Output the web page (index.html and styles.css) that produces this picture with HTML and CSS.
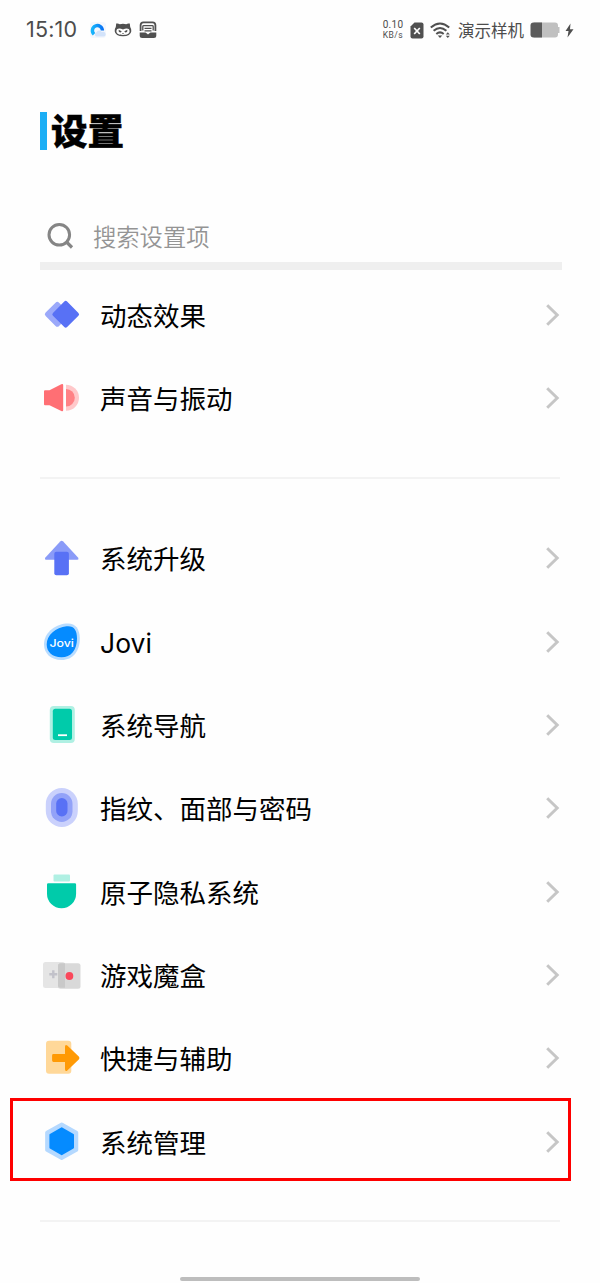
FILE: index.html
```html
<!DOCTYPE html>
<html lang="zh-CN">
<head>
<meta charset="utf-8">
<title>设置</title>
<link rel="stylesheet" href="styles.css">
</head>
<body>
<svg class="defs" width="0" height="0"><symbol id="chevron" viewBox="0 0 16 24"><path d="M3.200 2.200 13.200 12 3.200 21.800" fill="none" stroke="#c6c6c6" stroke-width="3"/></symbol></svg>
<header class="status">
  <span class="time">15:10</span>
  <svg class="app-icon" width="18" height="18" viewBox="0 0 18 18"><defs><linearGradient id="q" x1="0" y1="0" x2="1" y2="0"><stop offset="0" stop-color="#16b4fb"/><stop offset="1" stop-color="#0874f5"/></linearGradient></defs><rect x="1" y="1" width="16" height="16" rx="3" fill="#f4f7fc"/><path d="M5 13.200A5 5 0 1 1 13.400 9.500" fill="none" stroke="url(#q)" stroke-width="3.400"/><path d="M7 15.500a2.300 2.300 0 0 1 .5-4.200 3 3 0 0 1 5.300-.2 2.300 2.300 0 0 1 2.500 4.400z" fill="#d3e3fa"/></svg>
  <svg class="app-icon" width="18" height="18" viewBox="0 0 18 18"><path d="M2.200 2.600Q4 2 5.800 3.200q3.200-.9 6.400 0Q14 2 15.800 2.600L16.200 6q1.300 2 1.100 4.200-.7 5-8.300 5t-8.300-5Q.5 8 1.800 6z" fill="#505050"/><path d="M2.400 10C2.800 6.800 6 7 9 8.600c3-1.600 6.200-1.800 6.600 1.400.1 2.700-2.600 3.900-6.600 3.900S2.300 12.700 2.400 10z" fill="#fff"/><path d="m4.600 8.800 3.100 1.400-.9 1.400-1.900-.5zM13.400 8.800l-3.100 1.400.9 1.400 1.900-.5zM8 12h2l-1 1.200z" fill="#505050"/></svg>
  <svg class="app-icon" width="18" height="18" viewBox="0 0 18 18"><path d="M1.600 10V4.200Q1.600 1.300 4.500 1.300h9q2.900 0 2.900 2.900V10" fill="none" stroke="#505050" stroke-width="1.800"/><path d="M3.800 9.500V5.400q0-.8 1-.8h8.400q1 0 1 .8v4.100M5.500 7.300h7M5.500 9.800h7" fill="none" stroke="#505050" stroke-width="1.300"/><path d="M.7 11.500h5.800l1.700 1.200q.8 1.200 1.600 0l1.700-1.200h5.800v3q0 2.500-2.500 2.500H3.200Q.7 17 .7 14.500z" fill="#505050"/></svg>
  <div class="status-right">
    <span class="speed"><span>0.10</span><span class="unit">KB/s</span></span>
    <svg class="sim" width="14" height="17" viewBox="0 0 14 17"><path d="M4.500.5H11.500Q13.500.5 13.500 2.500v12q0 2-2 2h-9q-2 0-2-2v-10z" fill="#505050"/><path d="m4.200 6 5.600 6M9.800 6l-5.600 6" stroke="#fff" stroke-width="1.700"/></svg>
    <svg class="wifi" width="21" height="17" viewBox="0 0 21 17"><g fill="none" stroke="#505050" stroke-width="2"><path d="M.8 5.500q9.200-8 18.400 0"/><path d="M3.600 8.800q6.400-5.600 12.800 0"/><path d="M6.300 12q3.700-3.200 7.400 0"/></g><path d="M7.700 13.500h4.600L10 16zM15.800 12.500l2-2.300 2 2.300zM15.800 13.800h4l-2 2.200z" fill="#505050"/></svg>
    <span class="carrier">演示样机</span>
    <svg class="battery" width="31" height="16" viewBox="0 0 31 16"><path d="M4 .5h21q3 0 3 3V5h1.500v6H28v1.500q0 3-3 3H4z" fill="#c0c0c0"/><path d="M12 .5H3.500q-3 0-3 3v9q0 3 3 3H12z" fill="#5b5b5b"/></svg>
    <svg class="bolt" width="9" height="15" viewBox="0 0 9 15"><path d="M5.500.5.500 8h3L2.500 14.500 8.500 6.200H5z" fill="#505050"/></svg>
  </div>
</header>
<main>
  <h1 class="title"><span>设置</span></h1>
  <div class="search">
    <svg width="28" height="28" viewBox="0 0 28 28"><circle cx="12.300" cy="12.800" r="10.300" fill="none" stroke="#858585" stroke-width="3"/><path d="m19 19.500 6 6" stroke="#858585" stroke-width="3.200"/></svg>
    <span>搜索设置项</span>
  </div>
  <section class="group">
    <div class="row"><svg class="icon" viewBox="0 0 40 40"><rect x="5.800" y="9.800" width="19" height="19" rx="2.500" transform="rotate(45 15.300 19.300)" fill="#9ba9fa"/><rect x="13.700" y="9.300" width="20" height="20" rx="2" transform="rotate(45 23.700 19.300)" fill="#5871f5"/></svg><span>动态效果</span><svg class="chev"><use href="#chevron"/></svg></div>
    <div class="row"><svg class="icon" viewBox="0 0 40 40"><path d="M24 6.700a13 13 0 0 1 0 26z" fill="#ffc8ca"/><path d="M24 10.900a8.800 8.800 0 0 1 0 17.600z" fill="#ff8185"/><path d="M3 12.200h4.500L19.300 6.300q1.900-.8 1.900 1v24.800q0 1.800-1.900 1L7.500 27.200H3q-1 0-1-1v-13q0-1 1-1z" fill="#ff6f74"/></svg><span>声音与振动</span><svg class="chev"><use href="#chevron"/></svg></div>
  </section>
  <hr class="divider">
  <section class="group">
    <div class="row"><svg class="icon" viewBox="0 0 40 40"><path d="M18.200 3.400q1.500-1.200 3 0l15 16.300q1 1.900-.8 2H4q-1.800-.1-.8-2z" fill="#8a9bf8"/><rect x="12.300" y="13.700" width="14.600" height="23.600" rx="2" fill="#5871f5"/></svg><span>系统升级</span><svg class="chev"><use href="#chevron"/></svg></div>
    <div class="row"><svg class="icon" viewBox="0 0 40 40"><path d="M24 1.500C33 .5 37.500 6 37.800 16 38 29 31 38 19.500 38 9 38 2 31.500 2 22.500 2 11 12 3 24 1.500z" fill="#b8dcff"/><path d="M24.500 4.300C32 3.500 35 8 35 16.500 35 28 29 35.300 19.500 35.300 10.500 35.300 4.700 30 4.700 22.500 4.700 13 14 5.200 24.500 4.300z" fill="#058bff"/><text class="jovi-mark" x="19.700" y="24.600" text-anchor="middle" textLength="24.500" lengthAdjust="spacingAndGlyphs">Jovi</text></svg><span class="latin">Jovi</span><svg class="chev"><use href="#chevron"/></svg></div>
    <div class="row"><svg class="icon" viewBox="0 0 40 40"><rect x="7.800" y="1" width="25" height="37" rx="4" fill="#b0f0e3"/><rect x="10.800" y="3.700" width="19.200" height="31.300" rx="2.500" fill="#00cbaa"/><path d="M16 30.200h9" stroke="#fff" stroke-width="1.800"/></svg><span>系统导航</span><svg class="chev"><use href="#chevron"/></svg></div>
    <div class="row"><svg class="icon" viewBox="0 0 40 40"><rect x="3.800" y="0" width="32" height="39" rx="16" fill="#cad1fc"/><rect x="9" y="5" width="21.500" height="29" rx="10.700" fill="#92a2f8"/><rect x="14.200" y="10" width="11.300" height="18.500" rx="5.600" fill="#5871f5"/></svg><span>指纹、面部与密码</span><svg class="chev"><use href="#chevron"/></svg></div>
    <div class="row"><svg class="icon" viewBox="0 0 40 40"><rect x="11.500" y="2.500" width="16.500" height="7" rx="1" fill="#b0f0e3"/><path d="M6.300 11.200h26.500q1.300 0 1.300 1.300v9.300a14.500 14.500 0 0 1-29.100 0v-9.300q0-1.300 1.300-1.300z" fill="#00cbaa"/></svg><span>原子隐私系统</span><svg class="chev"><use href="#chevron"/></svg></div>
    <div class="row"><svg class="icon" viewBox="0 0 40 40"><rect x="1" y="7" width="22" height="26" rx="2.500" fill="#e5e5e5"/><rect x="16" y="8.300" width="22.500" height="25.400" rx="2.500" fill="#d9d9d9"/><path d="M16 10.800q0-2.500 2.500-2.500H23v24.500h-5q-2 0-2-2z" fill="#c9c9c9"/><path d="M7.300 19.300h8M11.300 15.300v8" stroke="#c2c2ca" stroke-width="2.400"/><circle cx="27.400" cy="21" r="3.900" fill="#fa485b"/></svg><span>游戏魔盒</span><svg class="chev"><use href="#chevron"/></svg></div>
    <div class="row"><svg class="icon" viewBox="0 0 40 40"><rect x="4" y="2.700" width="25.300" height="33" rx="3" fill="#ffd899"/><path d="M11.500 16H23V9q0-3 2.300-1.500l11.500 11q1.400 1.500 0 3l-11.500 11Q23 34 23 31v-7H11.500q-1.400 0-1.400-1.400v-5.200q0-1.400 1.400-1.400z" fill="#ff9a05"/></svg><span>快捷与辅助</span><svg class="chev"><use href="#chevron"/></svg></div>
    <div class="row marked"><svg class="icon" viewBox="0 0 40 40"><path d="M19.700 2.200 34.500 10.500v17.400L19.700 36.200 4.900 27.900V10.500z" fill="#b5d9ff" stroke="#b5d9ff" stroke-width="3.500" stroke-linejoin="round"/><path d="M19.700 6.300 31 12.900v12.700L19.700 32.200 8.400 25.600V12.900z" fill="#058bff" stroke="#058bff" stroke-width="2" stroke-linejoin="round"/></svg><span>系统管理</span><svg class="chev"><use href="#chevron"/></svg></div>
  </section>
  <hr class="divider">
</main>
<div class="home-bar"></div>
</body>
</html>
```

FILE: styles.css
```css
* { box-sizing: border-box; }
body {
  margin: 0;
  height: 1283px;
  overflow: hidden;
  display: flex;
  flex-direction: column;
  background: #fefefe;
  color: #000;
  font-family: "Noto Sans CJK SC", sans-serif;
}
svg { display: block; flex: none; }
.defs { position: absolute; }
.status {
  display: flex;
  align-items: center;
  height: 60px;
  padding: 0 26px;
  color: #4c4c4c;
}
.time {
  width: 63px;
  padding-bottom: 2px;
  font: 21.5px/24px Inter, sans-serif;
  letter-spacing: 0.2px;
}
.app-icon { margin-right: 7px; }
.status-right {
  display: flex;
  align-items: center;
  margin-left: auto;
}
.speed {
  display: flex;
  flex-direction: column;
  align-items: center;
  width: 22px;
  margin-right: 6px;
  font: 10px/10px Roboto, sans-serif;
  letter-spacing: 0.3px;
}
.unit { font-size: 8.5px; letter-spacing: 0.5px; }
.sim { margin-right: 6px; }
.wifi { margin-right: 7px; }
.carrier {
  width: 67px;
  font-size: 16.5px;
  line-height: 24px;
  white-space: nowrap;
}
.battery { margin: 0 4px 0 5px; }
main { padding: 52px 40px 0; }
.title {
  height: 38px;
  margin: 0;
  padding-left: 4px;
  border-left: 7px solid #1caef5;
  font-size: 36.5px;
  font-weight: 900;
  line-height: 36px;
  -webkit-text-stroke: 0.5px #000;
}
.search {
  display: flex;
  align-items: center;
  gap: 18px;
  width: 522px;
  height: 60px;
  margin: 60px 0 3.333px;
  padding: 0 0 0 7px;
  border-bottom: 8px solid #efefef;
  color: #949494;
  font-size: 23.3px;
  font-weight: 350;
  line-height: 34px;
}
.search span { padding-bottom: 1px; }
.row {
  position: relative;
  display: flex;
  align-items: center;
  height: 83.333px;
  padding-left: 2px;
  font-size: 26.5px;
  line-height: 40px;
}
.icon { width: 40px; height: 40px; margin-right: 18px; }
.latin { padding-top: 2px; font-family: Inter, sans-serif; }
.jovi-mark { fill: #fff; font: 500 11px Inter, sans-serif; }
.chev { width: 16px; height: 24px; margin-left: auto; }
.marked::after {
  content: "";
  position: absolute;
  inset: -2px -11px 2px -30px;
  border: 3px solid #fe0000;
}
.divider {
  height: 2px;
  margin: 37px 0 37.667px;
  border: 0;
  background: #f3f3f3;
}
.home-bar {
  width: 240px;
  height: 4px;
  margin: auto auto 2px;
  border-radius: 2px;
  background: #bdbdbd;
}
```
